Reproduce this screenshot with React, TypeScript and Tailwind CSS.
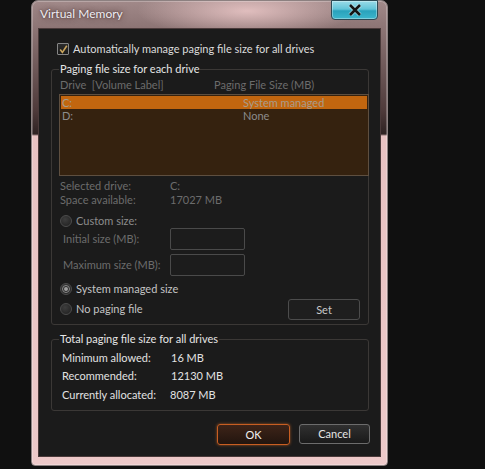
import React from "react";

function CheckBox() {
  return (
    <span className="flex h-[12px] w-[12px] items-center justify-center rounded-[1px] border border-[#858585] bg-[linear-gradient(#2c2c2c,#1a1a1a)]">
      <svg width="9" height="9" viewBox="0 0 9 9">
        <path d="M1.2 4.6 L3.4 7.4 L7.8 0.8" fill="none" stroke="#c9a45c" strokeWidth="1.6" />
      </svg>
    </span>
  );
}

function Radio({ checked }: { checked?: boolean }) {
  return (
    <span className="flex h-[12px] w-[12px] shrink-0 items-center justify-center rounded-full border border-[#4c4c4c] bg-[radial-gradient(circle_at_40%_35%,#3e3e3e,#1e1e1e)]">
      {checked && (
        <span className="flex h-[8px] w-[8px] items-center justify-center rounded-full border border-[#8a8a8a] bg-[#2a2a2a]">
          <span className="h-[4px] w-[4px] rounded-full bg-[#a0a0a0]" />
        </span>
      )}
    </span>
  );
}

export default function App() {
  return (
    <div className="h-[469px] w-[485px] overflow-hidden bg-[#101010] font-['Lato','Noto_Sans',sans-serif] text-[11px] leading-[14px]">
      {/* window */}
      <div className="ml-[31px] flex h-[466px] w-[357px] flex-col rounded-t-[7px] rounded-b-[4px] border border-[#8c8080] bg-[radial-gradient(ellipse_110px_26px_at_215px_10px,rgba(236,200,200,0.85),transparent),linear-gradient(to_bottom,#a18989_0px,#8c7474_28px,#4e3a3a_110px,#2e2222_133px,#e8c2c2_135px,#edc9c9_100%)] px-[6px] pb-[8px] shadow-[inset_0_0_0_1px_rgba(255,255,255,0.25)]">
        {/* title bar */}
        <div className="flex h-[27px] items-start justify-between">
          <span className="mt-[6px] pl-[2px] text-[12px] text-[#eeeef4] [text-shadow:0_0_6px_rgba(70,40,40,0.9),0_0_2px_rgba(70,40,40,0.8)]">
            Virtual Memory
          </span>
          <button className="mr-[3px] mt-[-1px] flex h-[20px] w-[47px] items-center justify-center rounded-b-[4px] border border-[#2d4a55] bg-[linear-gradient(#9adbe8_0%,#62c4d8_45%,#2aa2bc_55%,#3cb6cc_100%)] shadow-[inset_0_0_0_1px_rgba(255,255,255,0.35)]">
            <svg width="14" height="12" viewBox="0 0 14 12">
              <path d="M2 1 L12 11 M12 1 L2 11" stroke="#ffffff" strokeOpacity="0.5" strokeWidth="4.2" />
              <path d="M2 1 L12 11 M12 1 L2 11" stroke="#151515" strokeWidth="2.6" />
            </svg>
          </button>
        </div>

        {/* content */}
        <div className="flex flex-1 flex-col border border-[#4a3a3a] bg-[#1b1b1b]">
          <div className="ml-[18px] mt-[13px] flex h-[14px] items-center gap-[4px]">
            <CheckBox />
            <span className="text-[#dcdcdc]">Automatically manage paging file size for all drives</span>
          </div>

          {/* paging file size group */}
          <fieldset className="ml-[12px] mr-[11px] mt-[5px] rounded-[3px] border border-[#3b3836] pl-[7px]">
            <legend className="px-[1px] leading-[16px] text-[#e6e6e6]">Paging file size for each drive</legend>
            <div className="flex h-[16px] items-center text-[#6c6c6c]">
              <span className="ml-[1px] w-[154px]">Drive&nbsp;&nbsp;[Volume Label]</span>
              <span>Paging File Size (MB)</span>
            </div>
            <div className="mr-[-1px] mt-[1px] h-[82px] border border-[#5e4f40] bg-[#35220f] p-[1px] leading-[13px]">
              <div className="flex h-[13px] items-center bg-[#c2660f] text-[#a89c8c]">
                <span className="ml-[1px] w-[181px]">C:</span>
                <span>System managed</span>
              </div>
              <div className="flex h-[13px] items-center text-[#8c8c8c]">
                <span className="ml-[1px] w-[181px]">D:</span>
                <span>None</span>
              </div>
            </div>

            <div className="ml-[1px] mt-[3px] flex h-[14px] items-center text-[#6c6c6c]">
              <span className="w-[110px]">Selected drive:</span>
              <span>C:</span>
            </div>
            <div className="ml-[1px] flex h-[14px] items-center text-[#6c6c6c]">
              <span className="w-[110px]">Space available:</span>
              <span>17027 MB</span>
            </div>

            <div className="ml-[1px] mt-[7px] flex h-[14px] items-center gap-[4px] text-[#8c8c8c]">
              <Radio />
              <span>Custom size:</span>
            </div>
            <div className="ml-[4px] flex h-[22px] items-center text-[#6c6c6c]">
              <span className="w-[107px]">Initial size (MB):</span>
              <span className="h-[22px] w-[75px] rounded-[2px] border border-[#4a4a4a] bg-[#1c1c1c]" />
            </div>
            <div className="ml-[4px] mt-[4px] flex h-[22px] items-center text-[#6c6c6c]">
              <span className="w-[107px]">Maximum size (MB):</span>
              <span className="h-[22px] w-[75px] rounded-[2px] border border-[#4a4a4a] bg-[#1c1c1c]" />
            </div>

            <div className="flex items-end justify-between pb-[4px]">
              <div className="flex flex-col pb-[4px]">
                <div className="ml-[1px] mt-[6px] flex h-[14px] items-center gap-[4px] text-[#c4c4c4]">
                  <Radio checked />
                  <span>System managed size</span>
                </div>
                <div className="ml-[1px] mt-[6px] flex h-[14px] items-center gap-[4px] text-[#c4c4c4]">
                  <Radio />
                  <span>No paging file</span>
                </div>
              </div>
              <button className="mr-[8px] h-[21px] w-[72px] rounded-[3px] border border-[#4c4c4c] bg-[#1e1e1e] text-[#c8c8c8]">
                Set
              </button>
            </div>
          </fieldset>

          {/* totals group */}
          <fieldset className="ml-[12px] mr-[11px] mt-[6px] rounded-[3px] border border-[#3b3836] pb-[8px] pl-[10px]">
            <legend className="ml-[-3px] px-[1px] leading-[16px] text-[#e6e6e6]">Total paging file size for all drives</legend>
            <div className="mt-[4px] flex h-[14px] items-center text-[#e2e2e2]">
              <span className="w-[109px]">Minimum allowed:</span>
              <span>16 MB</span>
            </div>
            <div className="mt-[4px] flex h-[14px] items-center text-[#e2e2e2]">
              <span className="w-[109px]">Recommended:</span>
              <span>12130 MB</span>
            </div>
            <div className="mt-[5px] flex h-[14px] items-center text-[#e2e2e2]">
              <span className="w-[108px]">Currently allocated:</span>
              <span>8087 MB</span>
            </div>
          </fieldset>

          <div className="mr-[10px] mt-[13px] flex justify-end gap-[9px]">
            <button className="h-[21px] w-[73px] rounded-[3px] border border-[#c85e22] bg-[linear-gradient(#3e2418,#22150f)] text-[#f0f0f0] shadow-[0_0_3px_rgba(220,110,40,0.7)]">
              OK
            </button>
            <button className="h-[20px] w-[71px] rounded-[3px] border border-[#6c6c6c] bg-[linear-gradient(#303030,#1a1a1a)] text-[#e6e6e6]">
              Cancel
            </button>
          </div>
        </div>
      </div>
    </div>
  );
}
